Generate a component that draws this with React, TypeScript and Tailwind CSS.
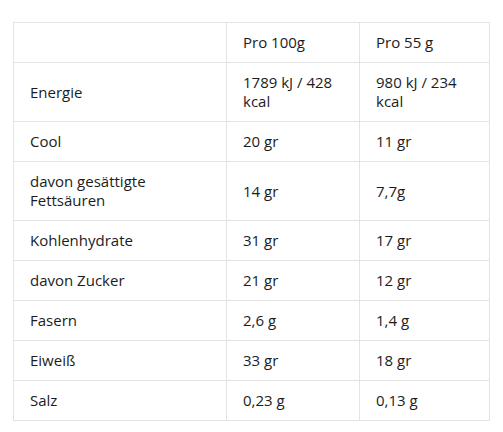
const rows: [string, string, string][] = [
  ['Energie', '1789 kJ / 428 kcal', '980 kJ / 234 kcal'],
  ['Cool', '20 gr', '11 gr'],
  ['davon gesättigte Fettsäuren', '14 gr', '7,7g'],
  ['Kohlenhydrate', '31 gr', '17 gr'],
  ['davon Zucker', '21 gr', '12 gr'],
  ['Fasern', '2,6 g', '1,4 g'],
  ['Eiweiß', '33 gr', '18 gr'],
  ['Salz', '0,23 g', '0,13 g'],
];

export default function App() {
  return (
    <div className="min-h-[432px] w-[503px] bg-white pl-[13px] pt-[22px] font-['Open_Sans',sans-serif] text-[15px] leading-[19px] text-[#1c1c1c]">
      <table className="w-[476px] table-fixed border-collapse border border-[#e3e3e3]">
        <colgroup>
          <col className="w-[213px]" />
          <col className="w-[133px]" />
          <col className="w-[130px]" />
        </colgroup>
        <thead>
          <tr>
            <th className="border border-[#e3e3e3] px-4 py-[10px]" />
            <th className="border border-[#e3e3e3] px-4 py-[10px] text-left font-medium">Pro 100g</th>
            <th className="border border-[#e3e3e3] px-4 py-[10px] text-left font-medium">Pro 55 g</th>
          </tr>
        </thead>
        <tbody>
          {rows.map(([label, a, b]) => (
            <tr key={label}>
              <td className="border border-[#e3e3e3] px-4 py-[10px] align-middle">{label}</td>
              <td className="border border-[#e3e3e3] px-4 py-[10px] align-middle">{a}</td>
              <td className="border border-[#e3e3e3] px-4 py-[10px] align-middle">{b}</td>
            </tr>
          ))}
        </tbody>
      </table>
    </div>
  );
}
